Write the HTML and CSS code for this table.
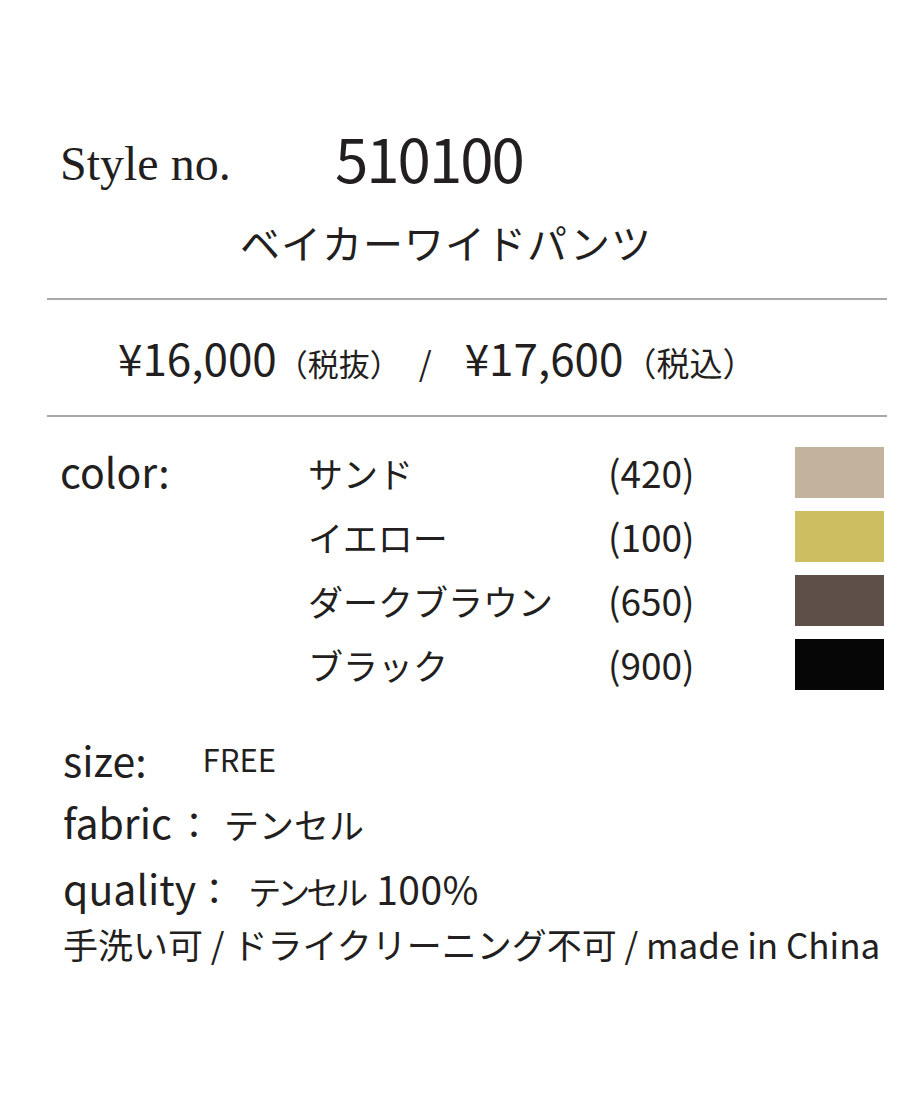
FILE: index.html
```html
<!DOCTYPE html>
<html lang="ja">
<head>
<meta charset="utf-8">
<title>510100 ベイカーワイドパンツ</title>
<link rel="stylesheet" href="styles.css">
</head>
<body>
<main class="sheet">
  <header class="head">
    <span class="style-label">Style no.</span><span class="style-no">510100</span>
  </header>
  <h1 class="title">ベイカーワイドパンツ</h1>
  <hr class="rule rule-top">
  <p class="price">
    <span class="amount">¥16,000</span><span class="tax">（税抜）</span><span class="slash">/</span>
    <span class="amount amount-2">¥17,600</span><span class="tax tax-2">（税込）</span>
  </p>
  <hr class="rule">
  <section class="colors">
    <span class="label color-label">color:</span>
    <span class="cname">サンド</span><span class="code">(420)</span><span class="swatch sand"></span>
    <span class="cname">イエロー</span><span class="code">(100)</span><span class="swatch yellow"></span>
    <span class="cname">ダークブラウン</span><span class="code">(650)</span><span class="swatch brown"></span>
    <span class="cname">ブラック</span><span class="code">(900)</span><span class="swatch black"></span>
  </section>
  <section class="specs">
    <p class="spec"><span class="label">size:</span><span class="free">FREE</span></p>
    <p class="spec"><span class="label">fabric</span><span class="colon">：</span><span class="jp">テンセル</span></p>
    <p class="spec"><span class="label">quality</span><span class="colon colon-q">：</span><span class="jp jp-narrow">テンセル</span><span class="pct">100%</span></p>
    <p class="care">手洗い可 / ドライクリーニング不可 / made in China</p>
  </section>
</main>
</body>
</html>
```
FILE: styles.css
```css
html, body {
  margin: 0;
  padding: 0;
  background: #fff;
}
body {
  color: #231f20;
  font-family: "Noto Sans CJK JP", "Noto Sans", sans-serif;
  width: 920px;
  height: 1104px;
  overflow: hidden;
}
.sheet {
  padding: 0 0 0 47px;
  width: 840px;
}
.head {
  padding: 126px 0 0 13px;
  height: 62px;
  line-height: 62px;
  font-size: 0;
  white-space: nowrap;
}
.style-label {
  display: inline-block;
  font-family: "Liberation Serif", serif;
  font-size: 48px;
  width: 275px;
  vertical-align: 3px;
}
.style-no {
  font-size: 60px;
  letter-spacing: -2px;
}
.title {
  margin: 0;
  padding: 29px 0 0 193px;
  font-size: 40px;
  font-weight: 400;
  line-height: 50px;
  letter-spacing: 1px;
}
.rule {
  margin: 0;
  border: 0;
  border-top: 2px solid #a9a9a9;
  width: 840px;
}
.rule-top {
  margin-top: 31px;
}
.price {
  margin: 0;
  padding: 0 0 0 71px;
  height: 115px;
  line-height: 115px;
  display: flex;
  align-items: baseline;
  white-space: nowrap;
}
.amount {
  font-size: 44px;
}
.tax {
  font-size: 31px;
}
.tax-2 {
  font-size: 33px;
}
.slash {
  font-size: 33px;
  margin-left: 18px;
}
.amount-2 {
  margin-left: 33px;
}
.colors {
  display: grid;
  grid-template-columns: 248px 300px 187px 89px;
  grid-auto-rows: 64px;
  align-items: center;
  padding: 23px 0 0 13px;
}
.label {
  font-size: 41px;
  line-height: 1;
}
.color-label {
  grid-row: 1 / 2;
  grid-column: 1;
  padding-bottom: 4px;
}
.colors .cname {
  grid-column: 2;
  font-size: 35px;
}
.colors .cname:nth-of-type(2) { grid-row: 1; }
.code {
  grid-column: 3;
  font-size: 37px;
}
.swatch {
  grid-column: 4;
  height: 51px;
}
.sand { background: #c3b29c; }
.yellow { background: #cdbf61; }
.brown { background: #5e5049; }
.black { background: #060606; }
.specs {
  padding: 30px 0 0 16px;
}
.spec {
  margin: 0;
  height: 65px;
  line-height: 65px;
  white-space: nowrap;
}
.free {
  font-size: 31px;
  margin-left: 56px;
  vertical-align: 5px;
}
.colon {
  font-size: 36px;
  margin: 0 12px 0 4px;
}
.colon-q {
  margin: 0 16px 0 0;
}
.jp {
  font-size: 35px;
}
.jp-narrow {
  font-size: 33px;
  letter-spacing: -4px;
}
.pct {
  font-size: 39px;
  letter-spacing: 0.5px;
  margin-left: 12px;
}
.care {
  margin: 0;
  font-size: 35px;
  line-height: 30px;
  padding-top: 8px;
  white-space: nowrap;
}
```
